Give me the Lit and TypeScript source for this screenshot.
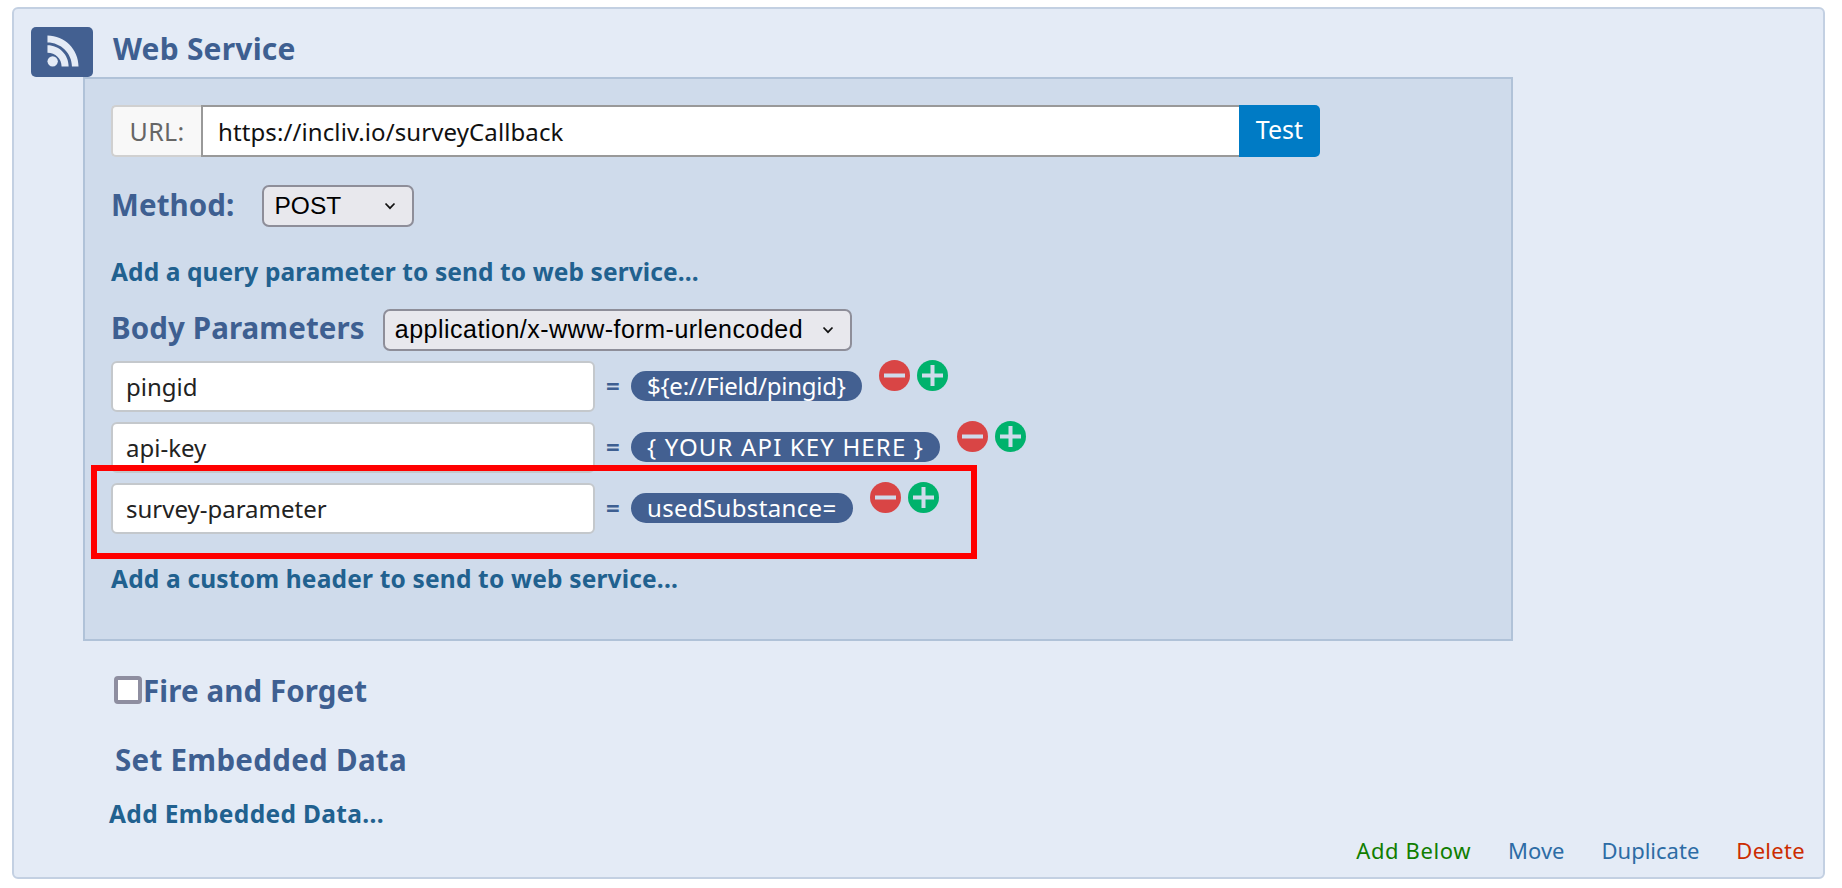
import { LitElement, html, svg, css } from "lit";
import { customElement } from "lit/decorators.js";

const rows = [
  { key: "pingid", val: "${e://Field/pingid}", cls: "pill p0" },
  { key: "api-key", val: "{ YOUR API KEY HERE }", cls: "pill p1" },
  { key: "survey-parameter", val: "usedSubstance=", cls: "pill p2" },
];

const chevron = html`<svg class="chev" width="12" height="8" viewBox="0 0 12 8"><path d="M1.500 1.500 6 6.200 10.500 1.500" fill="none" stroke="#111" stroke-width="1.700"/></svg>`;

@customElement("app-root")
export class AppRoot extends LitElement {
  static styles = css`
    :host { display: block; width: 1842px; height: 888px; background: #fff; font-family: "Noto Sans", sans-serif; overflow: hidden; }
    * { box-sizing: border-box; }
    .card { position: relative; margin: 7px 0 0 12px; width: 1813px; height: 872px; background: #e4ebf6; border: 2px solid #c3d0e2; border-radius: 6px; padding: 18px 0 0 17px; }
    .head { display: flex; height: 50px; }
    .icon { width: 62px; height: 50px; background: #436091; border-radius: 5px; display: flex; align-items: center; justify-content: center; padding: 0 0 2px 2px; }
    .title { margin: 2px 0 0 20px; font-size: 30px; font-weight: 700; color: #3e5f91; line-height: 40px; letter-spacing: 0.2px; }
    .panel { position: relative; margin: 0 0 0 52px; width: 1430px; height: 564px; background: #cfdbeb; border: 2px solid #b0c2d8; padding: 26px 0 0 26px; }
    .urlrow { display: flex; height: 52px; width: 1209px; }
    .urllabel { width: 90px; background: #f8f8f8; border: 2px solid #d0d0d0; border-right: 0; border-radius: 5px 0 0 5px; color: #666; font-size: 25px; letter-spacing: 0.3px; display: flex; align-items: center; justify-content: center; }
    .urlinput { flex: 1; background: #fff; border-top: 2px solid #999; border-bottom: 2px solid #999; border-left: 2px solid #999; font-size: 24px; letter-spacing: 0.1px; color: #111; display: flex; align-items: center; padding-left: 15px; }
    .test { width: 81px; background: #007bc5; color: #fff; font-size: 25px; padding-bottom: 4px; border-radius: 0 5px 5px 0; display: flex; align-items: center; justify-content: center; }
    .method { display: flex; align-items: center; margin-top: 28px; height: 42px; }
    .h { font-weight: 700; color: #3e5f91; font-size: 29.5px; letter-spacing: 0.1px; }
    .method .h, .body .h { margin-bottom: 4px; }
    .select { display: flex; align-items: center; justify-content: space-between; background: #e8e8ed; border: 2px solid #8e8e99; border-radius: 7px; height: 42px; font-family: "Liberation Sans", sans-serif; font-size: 24.5px; color: #000; padding: 0 16px 0 10px; }
    .method .select { width: 152px; margin-left: 28px; }
    .link { font-weight: 700; font-size: 24.5px; color: #21618f; line-height: 32px; }
    .q { margin-top: 29px; letter-spacing: 0.1px; }
    .body { display: flex; align-items: center; margin-top: 20px; height: 43px; }
    .body .select { width: 469px; margin-left: 18px; font-size: 25px; letter-spacing: 0.5px; }
    .rows { display: flex; flex-direction: column; gap: 10px; margin-top: 10px; }
    .row { display: flex; align-items: flex-start; }
    .input { width: 484px; height: 51px; background: #fff; border: 2px solid #c4c8cc; border-radius: 6px; padding-left: 13px; display: flex; align-items: center; font-size: 24px; color: #222; }
    .eq { width: 36px; margin-top: 10px; padding-left: 11px; font-size: 24px; font-weight: 700; color: #3e5f91; line-height: 30px; }
    .pill { margin-top: 10px; height: 30px; line-height: 29px; border-radius: 15px; background: #436091; color: #fff; font-size: 24px; padding: 0 16px; white-space: nowrap; }
    .p0 { letter-spacing: -0.25px; }
    .p1 { letter-spacing: 1.15px; }
    .p2 { letter-spacing: 0.35px; }
    .btns { display: flex; gap: 7px; margin-left: 17px; margin-top: -1px; }
    .below { margin-top: 29px; letter-spacing: 0.18px; }
    .fire { display: flex; align-items: center; margin: 29px 0 0 83px; height: 40px; }
    .check { width: 28px; height: 28px; background: #fff; border: 4px solid #8e8ea0; border-radius: 4px; margin-right: 1px; }
    .set { margin: 30px 0 0 84px; line-height: 40px; letter-spacing: 0.3px; }
    .add { margin: 18px 0 0 78px; letter-spacing: 0.35px; }
    .foot { position: absolute; right: 18px; bottom: 12px; display: flex; gap: 37px; font-size: 22px; line-height: 30px; }
    .g { color: #107e00; letter-spacing: 0.6px; } .b { color: #2d6ca5; } .r { color: #cc2c00; letter-spacing: 0.3px; }
    .mark { position: absolute; left: 6px; top: 386px; width: 886px; height: 94px; border: 6px solid #ff0000; pointer-events: none; }
  `;

  private btn(color: string, plus: boolean) {
    return html`<svg width="31" height="31" viewBox="0 0 31 31"><circle cx="15.500" cy="15.500" r="15.500" fill="${color}"/><rect x="5" y="13.500" width="21" height="4" fill="#cfdbeb"/>${plus ? svg`<rect x="13.500" y="5" width="4" height="21" fill="#cfdbeb"/>` : ""}</svg>`;
  }

  render() {
    return html`
      <div class="card">
        <div class="head">
          <div class="icon">
            <svg width="32" height="32" viewBox="0 0 34 34"><circle cx="6" cy="28" r="5.500" fill="#e4ebf6"/><path d="M.500 11v7.800c8.400 0 15 6.300 15 14.700H23C23 21 12.900 11 .500 11Z" fill="#e4ebf6"/><path d="M.500.500v7.500c14.100 0 26 11.400 26 25.500H33.500C33.500 15.300 18.700.500.500.500Z" fill="#e4ebf6"/></svg>
          </div>
          <div class="title">Web Service</div>
        </div>
        <div class="panel">
          <div class="urlrow">
            <div class="urllabel">URL:</div>
            <div class="urlinput">https://incliv.io/surveyCallback</div>
            <div class="test">Test</div>
          </div>
          <div class="method">
            <span class="h">Method:</span>
            <div class="select">POST ${chevron}</div>
          </div>
          <div class="link q">Add a query parameter to send to web service...</div>
          <div class="body">
            <span class="h">Body Parameters</span>
            <div class="select">application/x-www-form-urlencoded ${chevron}</div>
          </div>
          <div class="rows">
            ${rows.map(r => html`
              <div class="row">
                <div class="input">${r.key}</div>
                <div class="eq">=</div>
                <div class="${r.cls}">${r.val}</div>
                <div class="btns">${this.btn("#d94545", false)}${this.btn("#00b26c", true)}</div>
              </div>`)}
          </div>
          <div class="link below">Add a custom header to send to web service...</div>
          <div class="mark"></div>
        </div>
        <div class="fire"><div class="check"></div><span class="h">Fire and Forget</span></div>
        <div class="h set">Set Embedded Data</div>
        <div class="link add">Add Embedded Data...</div>
        <div class="foot">
          <span class="g">Add Below</span><span class="b">Move</span><span class="b">Duplicate</span><span class="r">Delete</span>
        </div>
      </div>
    `;
  }
}
